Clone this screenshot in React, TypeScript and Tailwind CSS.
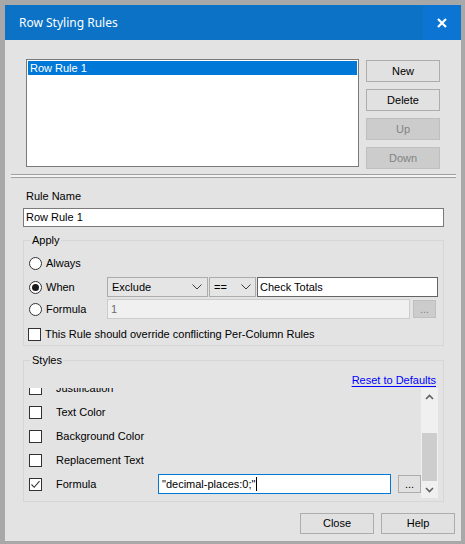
import React from 'react'

const font = "font-['Liberation_Sans',Arial,sans-serif]"

function Chevron({ up = false }: { up?: boolean }) {
  return (
    <svg width="9" height="6" viewBox="0 0 9 6" className="block">
      <path
        d={up ? 'M1 5 L4.5 1.5 L8 5' : 'M1 1 L4.5 4.5 L8 1'}
        fill="none"
        stroke="#606060"
        strokeWidth="1.6"
      />
    </svg>
  )
}

function SelectChevron() {
  return (
    <svg width="10" height="6" viewBox="0 0 10 6" className="block">
      <path d="M0.5 0.5 L5 5 L9.5 0.5" fill="none" stroke="#3c3c3c" strokeWidth="1" />
    </svg>
  )
}

function Btn({ label, disabled = false }: { label: string; disabled?: boolean }) {
  return (
    <div
      className={
        disabled
          ? 'flex h-[22px] w-[74px] items-center justify-center border border-[#bfbfbf] bg-[#cccccc] text-[#838383]'
          : 'flex h-[22px] w-[74px] items-center justify-center border border-[#adadad] bg-[#e1e1e1] text-black'
      }
    >
      {label}
    </div>
  )
}

function Radio({ checked = false }: { checked?: boolean }) {
  return (
    <div className="flex h-[13px] w-[13px] shrink-0 items-center justify-center rounded-full border border-[#333333] bg-white">
      {checked && <div className="h-[7px] w-[7px] rounded-full bg-[#1a1a1a]" />}
    </div>
  )
}

function Check({ checked = false }: { checked?: boolean }) {
  return (
    <div className="flex h-[13px] w-[13px] shrink-0 items-center justify-center border border-[#333333] bg-white">
      {checked && (
        <svg width="11" height="11" viewBox="0 0 11 11" className="block">
          <path d="M1.5 5.5 L4.2 8.3 L9.5 2.2" fill="none" stroke="#333333" strokeWidth="1.1" />
        </svg>
      )}
    </div>
  )
}

const styleRows = ['Justification', 'Text Color', 'Background Color', 'Replacement Text']

export default function App() {
  return (
    <div className={`h-[544px] w-[465px] bg-[#a8a8a8] pb-[3px] pl-[5px] pr-[4px] pt-[5px] text-[11px] leading-[13px] text-black ${font}`}>
      <div className="flex h-full flex-col bg-[#e3e3e3]">
        {/* title bar */}
        <div className="flex h-[35px] shrink-0 items-center bg-[#0b72c6]">
          <div className="flex-1 pl-[14px] font-['Noto_Sans',sans-serif] text-[12px] text-white">
            Row Styling Rules
          </div>
          <div className="flex h-full w-[38px] items-center justify-center bg-[#0c74d2]">
            <svg width="10" height="10" viewBox="0 0 10 10" className="block">
              <path d="M1 1 L9 9 M9 1 L1 9" stroke="white" strokeWidth="2.2" />
            </svg>
          </div>
        </div>

        {/* rule list */}
        <div className="mt-[19px] flex pl-[21px]">
          <div className="h-[108px] w-[333px] border border-[#7a7a7a] bg-white p-[1px]">
            <div className="h-[14px] bg-[#0078d7] pl-[2px] leading-[14px] text-white">Row Rule 1</div>
          </div>
          <div className="ml-[7px] mt-[1px] flex flex-col gap-[7px]">
            <Btn label="New" />
            <Btn label="Delete" />
            <Btn label="Up" disabled />
            <Btn label="Down" disabled />
          </div>
        </div>

        {/* splitter */}
        <div className="ml-[6px] mt-[5px] h-[4px] w-[445px] border-y border-[#a0a0a0] bg-[#f4f4f4]" />

        <div className="ml-[18px] w-[421px]">
          <div className="ml-[3px] mt-[12px]">Rule Name</div>
          <div className="mt-[5px] flex h-[19px] items-center border border-[#7a7a7a] bg-white pl-[2px]">
            Row Rule 1
          </div>

          {/* apply */}
          <fieldset className="mt-[7px] border border-[#d6d6d6] pb-[4px]">
            <legend className="ml-[7px] px-[1px]">Apply</legend>
            <div className="mt-[6px] flex h-[20px] items-center pl-[5px]">
              <Radio />
              <span className="ml-[4px]">Always</span>
            </div>
            <div className="mt-[4px] flex h-[20px] items-center">
              <div className="flex w-[83px] items-center pl-[5px]">
                <Radio checked />
                <span className="ml-[4px]">When</span>
              </div>
              <div className="flex h-[20px] w-[101px] items-center justify-between border border-[#acacac] bg-[#e5e5e5] pl-[4px] pr-[5px]">
                <span>Exclude</span>
                <SelectChevron />
              </div>
              <div className="ml-[1px] flex h-[20px] w-[47px] items-center justify-between border border-[#acacac] bg-[#e5e5e5] pl-[4px] pr-[4px]">
                <span>==</span>
                <SelectChevron />
              </div>
              <div className="ml-[1px] flex h-[20px] w-[181px] items-center border border-[#646464] bg-white pl-[2px]">
                Check Totals
              </div>
            </div>
            <div className="mt-[2px] flex h-[20px] items-center">
              <div className="flex w-[83px] items-center pl-[5px]">
                <Radio />
                <span className="ml-[4px]">Formula</span>
              </div>
              <div className="flex h-[20px] w-[303px] items-center border border-[#cccccc] bg-[#f0f0f0] pl-[3px] text-[#6d6d6d]">
                1
              </div>
              <div className="ml-[3px] flex h-[18px] w-[23px] items-center justify-center border border-[#bfbfbf] bg-[#cccccc] text-[#838383]">
                ...
              </div>
            </div>
            <div className="mt-[9px] flex h-[13px] items-center pl-[4px]">
              <Check />
              <span className="ml-[4px]">This Rule should override conflicting Per-Column Rules</span>
            </div>
          </fieldset>

          {/* styles */}
          <fieldset className="mt-[8px] border border-[#d6d6d6] pb-[3px]">
            <legend className="ml-[7px] px-[1px]">Styles</legend>
            <div className="mt-[7px] flex h-[13px] justify-end pr-[7px]">
              <span className="text-[#0000ff] underline underline-offset-[2px]">Reset to Defaults</span>
            </div>
            <div className="ml-[1px] mt-[1px] flex h-[110px] w-[413px]">
              <div className="flex-1 overflow-hidden">
                <div className="-mt-[12px]">
                  {styleRows.map((r) => (
                    <div key={r} className="flex h-[24px] items-center pl-[4px]">
                      <Check />
                      <span className="ml-[14px]">{r}</span>
                    </div>
                  ))}
                  <div className="flex h-[24px] items-center pl-[4px]">
                    <Check checked />
                    <span className="ml-[14px] w-[102px]">Formula</span>
                    <div className="flex h-[20px] w-[233px] items-center border border-[#0078d7] bg-white pl-[3px]">
                      <span>"decimal-places:0;"</span>
                      <span className="ml-[1px] h-[14px] w-[1px] bg-black" />
                    </div>
                    <div className="ml-[7px] flex h-[18px] w-[23px] items-center justify-center border border-[#adadad] bg-[#e1e1e1]">
                      ...
                    </div>
                  </div>
                </div>
              </div>
              <div className="flex w-[17px] flex-col bg-[#f0f0f0]">
                <div className="flex h-[17px] items-center justify-center">
                  <Chevron up />
                </div>
                <div className="flex-1" />
                <div className="mx-[1px] h-[48px] bg-[#cdcdcd]" />
                <div className="flex h-[17px] items-center justify-center">
                  <Chevron />
                </div>
              </div>
            </div>
          </fieldset>
        </div>

        {/* footer */}
        <div className="mt-[11px] flex justify-end gap-[7px] pr-[6px]">
          <div className="flex h-[21px] w-[74px] items-center justify-center border border-[#adadad] bg-[#e1e1e1]">Close</div>
          <div className="flex h-[21px] w-[74px] items-center justify-center border border-[#adadad] bg-[#e1e1e1]">Help</div>
        </div>
      </div>
    </div>
  )
}
